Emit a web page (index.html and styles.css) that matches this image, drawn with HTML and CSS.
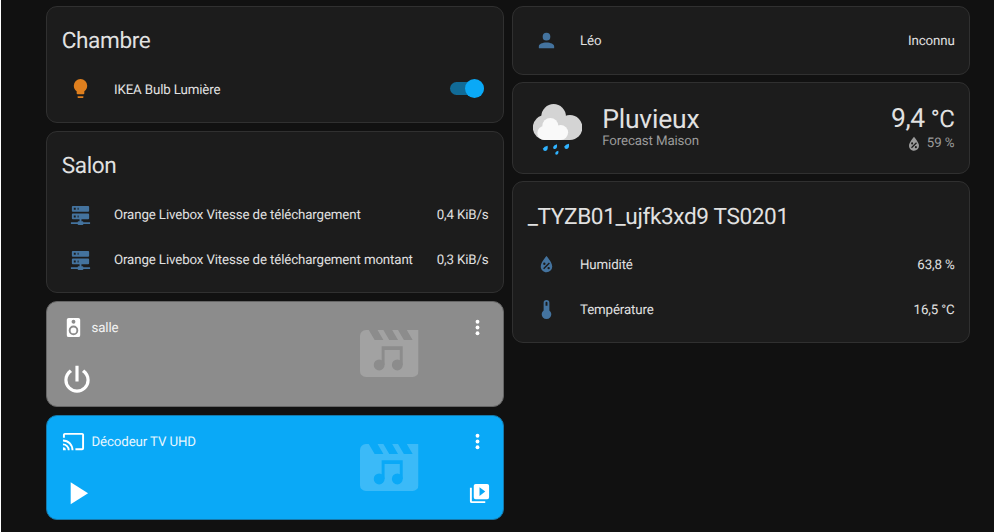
FILE: index.html
```html
<!DOCTYPE html>
<html lang="fr">
<head>
<meta charset="utf-8">
<title>Maison</title>
<link rel="stylesheet" href="styles.css">
</head>
<body>
<svg class="defs" width="0" height="0">
  <symbol id="bulb" viewBox="0 0 24 24"><path d="M12,2A7,7 0 0,0 5,9C5,11.38 6.19,13.47 8,14.74V17A1,1 0 0,0 9,18H15A1,1 0 0,0 16,17V14.74C17.81,13.47 19,11.38 19,9A7,7 0 0,0 12,2M9,21A1,1 0 0,0 10,22H14A1,1 0 0,0 15,21V20H9V21Z"/></symbol>
  <symbol id="account" viewBox="0 0 24 24"><path d="M12,4A4,4 0 0,1 16,8A4,4 0 0,1 12,12A4,4 0 0,1 8,8A4,4 0 0,1 12,4M12,14C16.42,14 20,15.79 20,18V20H4V18C4,15.79 7.58,14 12,14Z"/></symbol>
  <symbol id="server" viewBox="0 0 24 24"><path d="M13,19H14A1,1 0 0,1 15,20H22V22H15A1,1 0 0,1 14,23H10A1,1 0 0,1 9,22H2V20H9A1,1 0 0,1 10,19H11V17H4A1,1 0 0,1 3,16V12A1,1 0 0,1 4,11H20A1,1 0 0,1 21,12V16A1,1 0 0,1 20,17H13V19M4,3H20A1,1 0 0,1 21,4V8A1,1 0 0,1 20,9H4A1,1 0 0,1 3,8V4A1,1 0 0,1 4,3M9,7H10V5H9V7M9,15H10V13H9V15M5,5V7H7V5H5M5,13V15H7V13H5Z"/></symbol>
  <symbol id="humidity" viewBox="0 0 24 24"><path d="M12,3.25C12,3.25 6,10 6,14C6,17.32 8.69,20 12,20A6,6 0 0,0 18,14C18,10 12,3.25 12,3.25M14.47,9.97L15.53,11.03L9.53,17.03L8.47,15.97M9.75,10A1.25,1.25 0 0,1 11,11.25A1.25,1.25 0 0,1 9.75,12.5A1.25,1.25 0 0,1 8.5,11.25A1.25,1.25 0 0,1 9.75,10M14.25,14.5A1.25,1.25 0 0,1 15.5,15.75A1.25,1.25 0 0,1 14.25,17A1.25,1.25 0 0,1 13,15.75A1.25,1.25 0 0,1 14.25,14.5Z"/></symbol>
  <symbol id="thermometer" viewBox="0 0 24 24"><path d="M15 13V5A3 3 0 0 0 9 5V13A5 5 0 1 0 15 13M12 4A1 1 0 0 1 13 5V8H11V5A1 1 0 0 1 12 4Z"/></symbol>
  <symbol id="speaker" viewBox="0 0 24 24"><path d="M12,12A3,3 0 0,0 9,15A3,3 0 0,0 12,18A3,3 0 0,0 15,15A3,3 0 0,0 12,12M12,20A5,5 0 0,1 7,15A5,5 0 0,1 12,10A5,5 0 0,1 17,15A5,5 0 0,1 12,20M12,4A2,2 0 0,1 14,6A2,2 0 0,1 12,8C10.89,8 10,7.1 10,6C10,4.89 10.89,4 12,4M17,2H7C5.89,2 5,2.89 5,4V20A2,2 0 0,0 7,22H17A2,2 0 0,0 19,20V4C19,2.89 18.1,2 17,2Z"/></symbol>
  <symbol id="power" viewBox="0 0 24 24"><path d="M16.56,5.44L15.11,6.89C16.84,7.94 18,9.83 18,12A6,6 0 0,1 12,18A6,6 0 0,1 6,12C6,9.83 7.16,7.94 8.88,6.88L7.44,5.44C5.36,6.88 4,9.28 4,12A8,8 0 0,0 12,20A8,8 0 0,0 20,12C20,9.28 18.64,6.88 16.56,5.44M13,3H11V13H13"/></symbol>
  <symbol id="cast" viewBox="0 0 24 24"><path d="M1,10V12A9,9 0 0,1 10,21H12C12,14.92 7.07,10 1,10M1,14V16A5,5 0 0,1 6,21H8A7,7 0 0,0 1,14M1,18V21H4A3,3 0 0,0 1,18M21,3H3C1.89,3 1,3.89 1,5V8H3V5H21V19H14V21H21A2,2 0 0,0 23,19V5C23,3.89 22.1,3 21,3Z"/></symbol>
  <symbol id="dots" viewBox="0 0 24 24"><circle cx="12" cy="6" r="2"/><circle cx="12" cy="12" r="2"/><circle cx="12" cy="18" r="2"/></symbol>
  <symbol id="play" viewBox="0 0 24 24"><path d="M8,5.14V19.14L19,12.14L8,5.14Z"/></symbol>
  <symbol id="browse" viewBox="0 0 24 24"><path d="M4,6H2V20A2,2 0 0,0 4,22H18V20H4V6M20,2H8A2,2 0 0,0 6,4V16A2,2 0 0,0 8,18H20A2,2 0 0,0 22,16V4A2,2 0 0,0 20,2M12,14.5V5.5L18,10L12,14.5Z"/></symbol>
  <symbol id="media" viewBox="2 4 20 16" preserveAspectRatio="none">
    <path d="M18,4L20,7.4H17L15,4H13L15,7.4H12L10,4H8L10,7.4H7L5,4H4A2,2 0 0,0 2,6V18A2,2 0 0,0 4,20H20A2,2 0 0,0 22,18V4H18Z"/>
    <g class="note"><path d="M9.4,9.5H16.6V15.9H15.6V10.8H10.4V15.9H9.4Z"/><circle cx="8.55" cy="15.9" r="1.85"/><circle cx="14.75" cy="15.9" r="1.85"/></g>
  </symbol>
</svg>
<main class="view">
  <div class="column left">
    <section class="card group">
      <h1>Chambre</h1>
      <div class="row">
        <svg class="icon on"><use href="#bulb"/></svg>
        <span class="name">IKEA Bulb Lumière</span>
        <span class="switch"><i></i></span>
      </div>
    </section>
    <section class="card group">
      <h1>Salon</h1>
      <div class="row">
        <svg class="icon"><use href="#server"/></svg>
        <span class="name">Orange Livebox Vitesse de téléchargement</span>
        <span class="state">0,4 KiB/s</span>
      </div>
      <div class="row">
        <svg class="icon"><use href="#server"/></svg>
        <span class="name">Orange Livebox Vitesse de téléchargement montant</span>
        <span class="state">0,3 KiB/s</span>
      </div>
    </section>
    <section class="card player off">
      <svg class="art"><use href="#media"/></svg>
      <div class="top"><svg class="icon"><use href="#speaker"/></svg><span class="name">salle</span><svg class="icon"><use href="#dots"/></svg></div>
      <div class="controls"><svg class="big"><use href="#power"/></svg></div>
    </section>
    <section class="card player playing">
      <svg class="art"><use href="#media"/></svg>
      <div class="top"><svg class="icon"><use href="#cast"/></svg><span class="name">Décodeur TV UHD</span><svg class="icon"><use href="#dots"/></svg></div>
      <div class="controls"><svg class="big"><use href="#play"/></svg><svg class="icon"><use href="#browse"/></svg></div>
    </section>
  </div>
  <div class="column right">
    <section class="card single">
      <div class="row">
        <svg class="icon"><use href="#account"/></svg>
        <span class="name">Léo</span>
        <span class="state">Inconnu</span>
      </div>
    </section>
    <section class="card weather">
      <svg class="cloud" viewBox="68 72 149 153">
        <g fill="#d4d4d4"><circle cx="130" cy="109" r="37"/><circle cx="105" cy="142.500" r="37.500"/><circle cx="179" cy="142.500" r="37.500"/><path d="M105 110H179V180H105Z"/></g>
        <g fill="#f9f9f9"><circle cx="120" cy="138" r="24"/><circle cx="102" cy="159" r="21"/><circle cx="151" cy="157.500" r="22.500"/><path d="M102 140H151V180H102Z"/></g>
        <g fill="#30b3ff"><path d="M112 197Q114 212 105 213Q97 213 99 205Q101 199 112 197Z"/><path d="M140 193Q142 206 134 207Q127 207 129 200Q131 195 140 193Z"/><path d="M176 191Q178 206 169 207Q161 207 163 199Q165 193 176 191Z"/><path d="M144 212Q146 223 139 224Q133 224 135 218Q137 213 144 212Z"/></g>
      </svg>
      <div class="info"><div class="big-text">Pluvieux</div><div class="sub">Forecast Maison</div></div>
      <div class="temp"><div class="big-text">9,4 <span class="unit">°C</span></div><div class="sub"><svg><use href="#humidity"/></svg>59 %</div></div>
    </section>
    <section class="card group">
      <h1>_TYZB01_ujfk3xd9 TS0201</h1>
      <div class="row">
        <svg class="icon"><use href="#humidity"/></svg>
        <span class="name">Humidité</span>
        <span class="state">63,8 %</span>
      </div>
      <div class="row">
        <svg class="icon"><use href="#thermometer"/></svg>
        <span class="name">Température</span>
        <span class="state">16,5 °C</span>
      </div>
    </section>
  </div>
</main>
</body>
</html>
```
FILE: styles.css
```css
* { box-sizing: border-box; }
body {
  margin: 0;
  height: 532px;
  overflow: hidden;
  background: #111;
  border-left: 1px solid #fff;
  color: #e1e1e1;
  font: 13.3px/19px Roboto, sans-serif;
  letter-spacing: -0.13px;
  text-rendering: geometricPrecision;
}
.defs { position: absolute; }
svg { display: block; flex: none; }
.view {
  display: grid;
  grid-template-columns: 458.300px 458.300px;
  column-gap: 7.700px;
  padding: 5.500px 0 0 45px;
  align-items: start;
}
.column { display: flex; flex-direction: column; }
.left { gap: 7.900px; }
.right { gap: 7px; }
.card {
  background: #1c1c1c;
  border: 1px solid #303030;
  border-radius: 11px;
}
.group { padding: 0 14.700px 14.300px; }
h1 {
  margin: 0;
  height: 63.200px;
  padding-top: 12.500px;
  font-size: 22.600px;
  line-height: 44px;
  font-weight: 400;
  letter-spacing: -0.37px;
  white-space: nowrap;
}
.row { display: flex; align-items: center; height: 38px; white-space: nowrap; }
.row + .row { margin-top: 7px; }
.icon { width: 23px; height: 23px; fill: #44739e; }
.row .icon { margin: 0 22px 0 7.300px; }
.row .icon.on { fill: #df7f1e; }
.name { flex: 1; }
.row .name, .row .state { padding-top: 2.800px; }
.switch {
  width: 33.500px;
  height: 13.500px;
  margin-right: 5px;
  border-radius: 7px;
  background: #116b97;
  display: flex;
  align-items: center;
  justify-content: flex-end;
}
.switch i { width: 19px; height: 19px; flex: none; border-radius: 50%; background: #0aa9f7; }
.single { height: 69.500px; padding: 14.700px; }

.weather { height: 92px; display: flex; padding: 0 15px 0 19.600px; }
.cloud { width: 49.600px; height: 51px; margin: 21px 20px 0 0; }
.info { flex: 1; padding-top: 20.500px; }
.temp { padding-top: 20px; text-align: right; }
.big-text { font-size: 26.500px; line-height: 32px; letter-spacing: -0.2px; }
.temp .big-text { letter-spacing: -0.5px; }
.unit { font-size: 24px; }
.sub { font-size: 13.300px; line-height: 16px; margin-top: -1.500px; color: #9b9b9b; }
.temp .sub { display: flex; justify-content: flex-end; align-items: center; margin-top: -1.200px; }
.sub svg { width: 20px; height: 20px; fill: #9b9b9b; margin-right: 2.500px; }

.player { position: relative; height: 105.500px; padding: 14px 14.500px 0 15px; color: #fff; --bg: #8c8c8c; --art: #a2a2a2; --edge: #666; background: var(--bg); border-color: var(--edge); }
.playing { --bg: #0aa9f7; --art: #3bbaf8; --edge: #1579ab; }
.player .icon { fill: #fff; }
.player .name { padding: 2px 0 0 6.500px; opacity: 0.9; }
.art { position: absolute; left: 313.300px; top: 28px; width: 58.500px; height: 47px; fill: var(--art); }
.note { fill: var(--bg); }
.top, .controls { display: flex; align-items: center; justify-content: space-between; }
.controls { height: 38px; margin: 21.500px -2px 0 -4.500px; }
.controls .big { width: 38px; height: 38px; fill: #fff; }
```
